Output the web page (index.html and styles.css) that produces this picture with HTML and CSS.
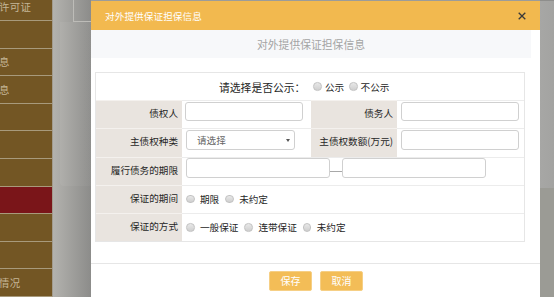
FILE: index.html
```html
<!DOCTYPE html>
<html lang="zh-CN">
<head>
<meta charset="utf-8">
<title>对外提供保证担保信息</title>
<link rel="stylesheet" href="styles.css">
</head>
<body>
<div class="page">
  <nav class="sidebar">
    <ul class="menu">
      <li><span>许可证</span></li>
      <li></li>
      <li><span>息</span></li>
      <li><span>息</span></li>
      <li></li>
      <li></li>
      <li></li>
      <li class="active"></li>
      <li></li>
      <li></li>
      <li><span>情况</span></li>
    </ul>
  </nav>
  <div class="backdrop">
    <div class="bg-top"></div>
    <div class="bg-panel"></div>
  </div>
  <div class="modal">
    <div class="modal-header">
      <span class="modal-title">对外提供保证担保信息</span>
      <svg class="close" width="8" height="8" viewBox="0 0 8 8"><path d="M0.7 0.7L7.3 7.3M7.3 0.7L0.7 7.3" stroke="#3a3a3a" stroke-width="1.3" fill="none"/></svg>
    </div>
    <div class="modal-body">
      <div class="subtitle">对外提供保证担保信息</div>
      <div class="form">
        <div class="cell publicity">
          <span class="pub-label">请选择是否公示：</span>
          <label class="opt tight"><span class="radio"></span>公示</label>
          <label class="opt tight"><span class="radio"></span>不公示</label>
        </div>

        <div class="cell label">债权人</div>
        <div class="cell value"><span class="input w118"></span></div>
        <div class="cell label">债务人</div>
        <div class="cell value"><span class="input w118"></span></div>

        <div class="cell label">主债权种类</div>
        <div class="cell value"><span class="input select w109"><span class="ph">请选择</span><span class="arrow"></span></span></div>
        <div class="cell label">主债权数额(万元)</div>
        <div class="cell value"><span class="input w118"></span></div>

        <div class="cell label">履行债务的期限</div>
        <div class="cell value wide"><span class="input w144"></span><span class="dash"></span><span class="input w144"></span></div>

        <div class="cell label">保证的期间</div>
        <div class="cell value wide radios">
          <label class="opt"><span class="radio"></span>期限</label>
          <label class="opt"><span class="radio"></span>未约定</label>
        </div>

        <div class="cell label">保证的方式</div>
        <div class="cell value wide radios">
          <label class="opt"><span class="radio"></span>一般保证</label>
          <label class="opt"><span class="radio"></span>连带保证</label>
          <label class="opt"><span class="radio"></span>未约定</label>
        </div>
      </div>
    </div>
    <div class="modal-footer">
      <button class="btn">保存</button>
      <button class="btn">取消</button>
    </div>
  </div>
  <div class="backdrop-right">
    <div class="br-top"></div>
  </div>
</div>
</body>
</html>
```

FILE: styles.css
```css
* { box-sizing: border-box; }
html, body { margin: 0; padding: 0; }
body {
  width: 554px;
  height: 297px;
  overflow: hidden;
  font-family: "Noto Sans CJK SC", "Noto Sans", sans-serif;
  background: #9c9c99;
}
.page {
  display: flex;
  width: 554px;
  height: 297px;
  overflow: hidden;
}

/* sidebar */
.sidebar {
  width: 53px;
  flex: none;
  background: #735624;
  border-right: 1px solid #a29b8d;
  overflow: hidden;
}
.menu {
  list-style: none;
  margin: -6.6px 0 0 0;
  padding: 0;
}
.menu li {
  height: 27.6px;
  border-bottom: 1px solid #a89a7c;
  display: flex;
  align-items: center;
  font-size: 10.4px;
  color: #c4b596;
  white-space: nowrap;
  letter-spacing: 0.3px;
}
.menu li span { margin-left: -1px; }
.menu li.active { background: #7a1519; }

/* backdrop between sidebar and modal */
.backdrop {
  width: 38px;
  flex: none;
  background: linear-gradient(to right, #b3b2ae, #8c8c8a);
  display: flex;
  flex-direction: column;
}
.bg-top {
  height: 22px;
  margin-left: 20px;
  border-left: 1px solid #bdbcb8;
  border-bottom: 1px solid #bdbcb8;
}
.bg-panel {
  height: 164px;
  margin-left: 7px;
  border-bottom-left-radius: 4px;
  background: linear-gradient(to right, rgba(255,255,255,0.05), rgba(255,255,255,0.03));
}

/* modal */
.modal {
  width: 449px;
  flex: none;
  margin-top: 1px;
  background: #fff;
  display: flex;
  flex-direction: column;
}
.modal-header {
  height: 29px;
  flex: none;
  background: #f2b94f;
  display: flex;
  align-items: center;
  justify-content: space-between;
  padding: 0 14px 0 14px;
}
.modal-title {
  color: #fff;
  font-size: 9.6px;
  letter-spacing: 0.1px;
}
.close { display: block; margin-top: 1px; }

.modal-body {
  height: 234px;
  flex: none;
  border-bottom: 1px solid #e6e6e6;
}
.subtitle {
  width: 440px;
  height: 28px;
  background: #f7f8fa;
  color: #a4a4a4;
  font-size: 10.8px;
  display: flex;
  align-items: center;
  justify-content: center;
}

.form {
  margin: 14px 0 0 4px;
  width: 430px;
  display: grid;
  grid-template-columns: 86px 129px 86px 127px;
  grid-template-rows: 27px repeat(5, 28.3px);
  border: 1px solid #e6e6e6;
  font-size: 9.6px;
  color: #262626;
}
.cell {
  display: flex;
  align-items: center;
  border-top: 1px solid #ececec;
}
.publicity {
  grid-column: 1 / span 4;
  border-top: none;
  justify-content: flex-start;
  padding-left: 123px;
}
.pub-label {
  font-size: 10.8px;
  margin-right: 8px;
}
.label {
  background: #e9e4df;
  border-top-color: #f4f1ee;
  justify-content: flex-end;
  padding-right: 4px;
  padding-bottom: 3px;
}
.value {
  padding-left: 3px;
  padding-bottom: 6px;
}
.label + .value + .label + .value { padding-left: 4px; }
.wide { grid-column: 2 / span 3; }
.radios { padding-left: 4px; padding-bottom: 1px; }

.input {
  display: block;
  height: 19.5px;
  border: 1px solid #d0d0d0;
  border-radius: 3px;
  background: #fff;
}
.w118 { width: 118px; }
.w109 { width: 109px; }
.w144 { width: 144px; }
.select {
  display: flex;
  align-items: center;
  justify-content: space-between;
  padding: 0 4px 0 10px;
}
.ph { color: #666; font-size: 9.6px; }
.arrow {
  width: 0;
  height: 0;
  border-left: 2.5px solid transparent;
  border-right: 2.5px solid transparent;
  border-top: 3.5px solid #555;
  margin-top: 1px;
}
.dash {
  width: 12px;
  height: 1px;
  background: #a8a8a8;
  margin-top: 7px;
}

.opt {
  display: flex;
  align-items: center;
  margin-right: 6px;
  white-space: nowrap;
}
.opt.tight { margin-right: 5px; }
.radio {
  width: 8.5px;
  height: 8.5px;
  border-radius: 50%;
  border: 1px solid #c2c2c2;
  background: linear-gradient(#e8e8e8, #cfcfcf);
  margin-right: 5.5px;
  flex: none;
}
.tight .radio { margin-right: 3px; }

.modal-footer {
  display: flex;
  justify-content: center;
  gap: 8px;
  padding-top: 7px;
  padding-left: 1px;
}
.btn {
  width: 43px;
  height: 19.5px;
  border: 1px solid #f6cf85;
  border-radius: 2px;
  background: #f3bd57;
  color: #fff;
  font-family: "Noto Sans CJK SC", sans-serif;
  font-size: 10px;
  padding: 0;
  line-height: 1;
}

/* right backdrop */
.backdrop-right {
  flex: 1;
  background: #9b9b95;
  border-top: 1px solid #8e8e8c;
}
.br-top {
  height: 187px;
  background: linear-gradient(to right, #a7a7a5, #a3a3a1);
}
```
